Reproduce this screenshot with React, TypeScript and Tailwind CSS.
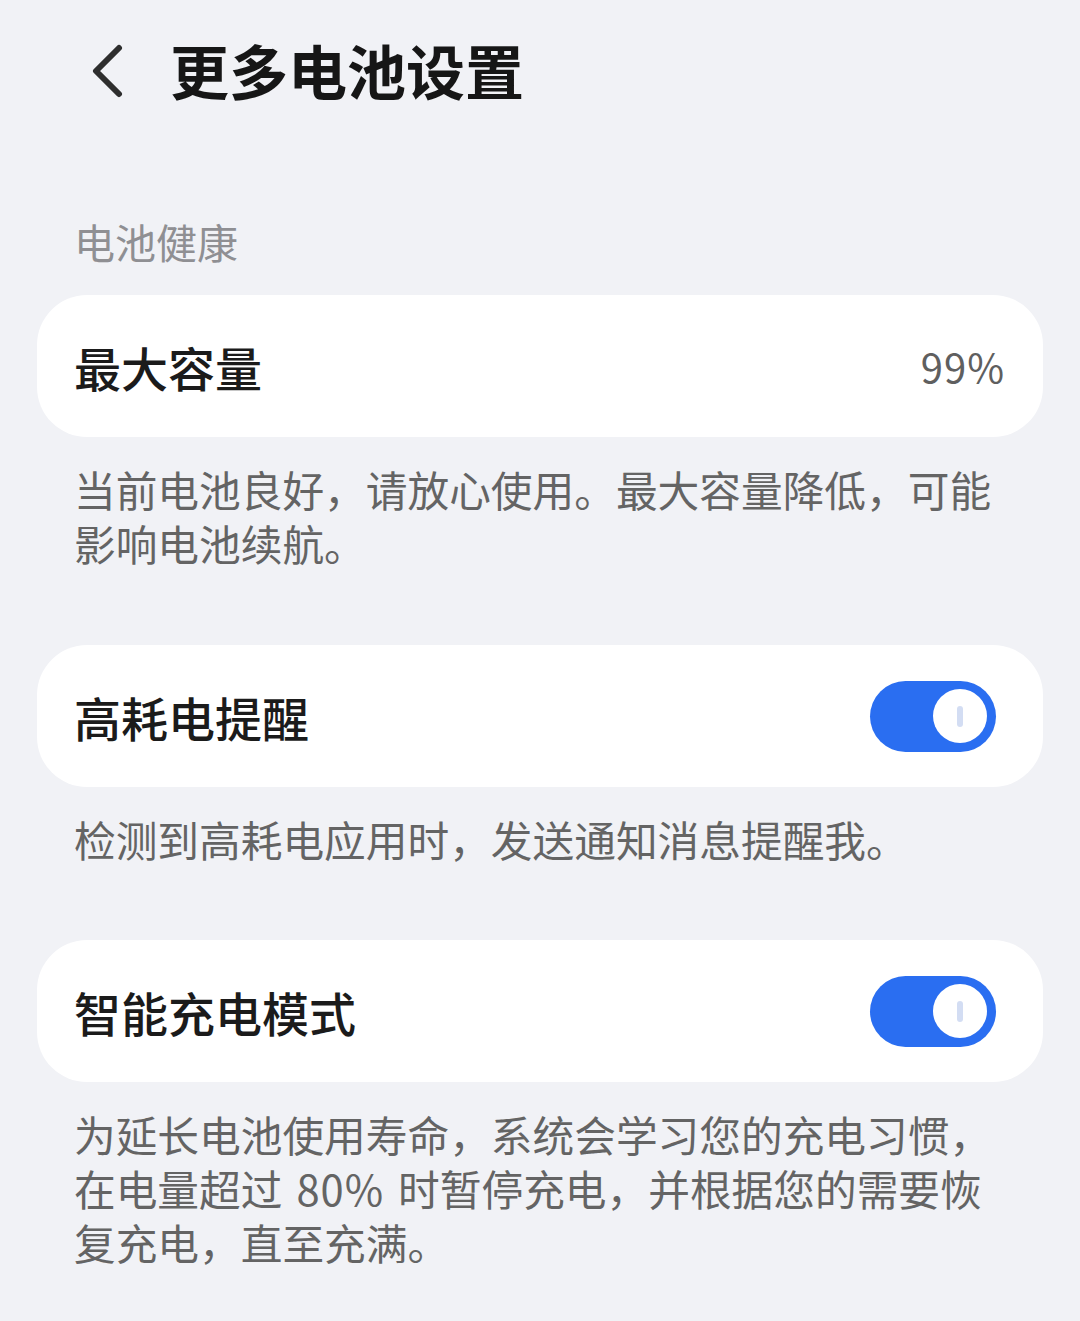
import React from "react";

const font = '"Noto Sans CJK SC", "Noto Sans", sans-serif';

function Toggle() {
  return (
    <div className="w-[126px] h-[71px] rounded-full bg-[#2a6ef1] flex items-center justify-end pr-[9px]">
      <div className="w-[54px] h-[54px] rounded-full bg-white flex items-center justify-center">
        <div className="w-[6px] h-[21px] rounded-full bg-[#d3ddf3]" />
      </div>
    </div>
  );
}

function Card({ title, right, pr }: { title: string; right: React.ReactNode; pr: string }) {
  return (
    <div className={`mx-[37px] h-[142px] rounded-[50px] bg-white flex items-center justify-between pl-[37px] ${pr}`}>
      <div className="text-[47px] font-medium text-[#1b1b1b] leading-none">{title}</div>
      {right}
    </div>
  );
}

function Desc({ children }: { children: React.ReactNode }) {
  return (
    <div className="pl-[74px] pt-[25px] text-[41.7px] leading-[54px] text-[#646464] whitespace-nowrap [text-spacing-trim:space-all]">
      {children}
    </div>
  );
}

export default function App() {
  return (
    <div className="w-[1080px] h-[1321px] bg-[#f1f2f6] overflow-hidden" style={{ fontFamily: font }}>
      <div className="h-[143px] flex items-center pl-[88px]">
        <svg width="40" height="56" viewBox="0 0 40 56" className="mr-[42px]">
          <path d="M31 4 L8 27 L31 50" fill="none" stroke="#2e2e2e" strokeWidth="6" strokeLinecap="round" strokeLinejoin="round" />
        </svg>
        <div className="text-[59px] font-bold text-[#161616] leading-none -mt-[4px]">更多电池设置</div>
      </div>
      <div className="px-[74px] pt-[71px] pb-[27px] text-[41px] leading-[54px] text-[#8f8f93]">电池健康</div>
      <Card
        title="最大容量"
        pr="pr-[38px]"
        right={<div className="text-[40px] text-[#5f5f5f] leading-none tracking-[1px]">99%</div>}
      />
      <Desc>
        当前电池良好，请放心使用。最大容量降低，可能
        <br />
        影响电池续航。
      </Desc>
      <div className="h-[75px]" />
      <Card title="高耗电提醒" pr="pr-[47px]" right={<Toggle />} />
      <Desc>检测到高耗电应用时，发送通知消息提醒我。</Desc>
      <div className="h-[74px]" />
      <Card title="智能充电模式" pr="pr-[47px]" right={<Toggle />} />
      <Desc>
        为延长电池使用寿命，系统会学习您的充电习惯，
        <br />
        在电量超过<span className="ml-[14px] mr-[14px] tracking-[1px]">80%</span>时暂停充电，并根据您的需要恢
        <br />
        复充电，直至充满。
      </Desc>
    </div>
  );
}
